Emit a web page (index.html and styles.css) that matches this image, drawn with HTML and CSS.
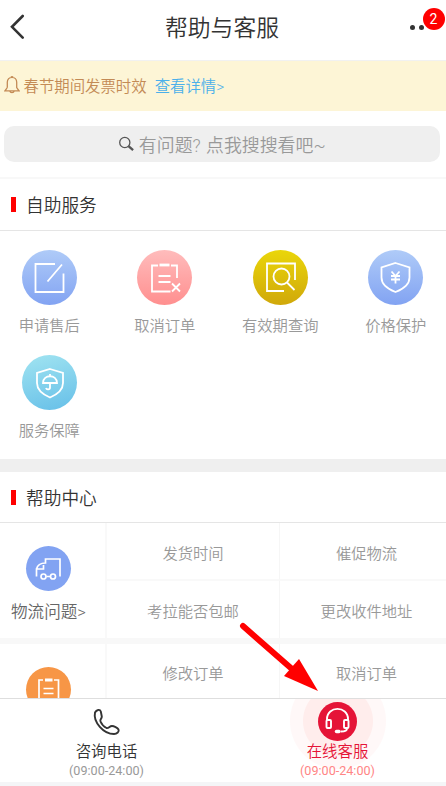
FILE: index.html
```html
<!DOCTYPE html>
<html lang="zh-CN">
<head>
<meta charset="utf-8">
<title>帮助与客服</title>
<link rel="stylesheet" href="styles.css">
</head>
<body>
<div class="page">
  <header class="header">
    <svg class="back" width="16" height="26" viewBox="0 0 16 26"><path d="M13.7 3 3 13.8 13.7 24.6"/></svg>
    <h1>帮助与客服</h1>
    <div class="more"><i></i><i></i><span class="badge">2</span></div>
  </header>
  <div class="notice">
    <svg width="16" height="19" viewBox="0 0 16 19"><path d="M7 2.2a1.2 1.2 0 0 1 2 0M3.3 12.5V7.3C3.3 4.2 5.3 2.3 8 2.3s4.7 1.9 4.7 5v5.2L15 15.8H1l2.3-3.3M5.8 16.2c.5 2 3.9 2 4.4 0"/></svg>
    <span>春节期间发票时效</span><a class="detail">查看详情&gt;</a>
  </div>
  <div class="search-area">
    <div class="search">
      <svg width="17" height="17" viewBox="0 0 17 17"><circle cx="6.8" cy="6.5" r="5.1"/><path class="handle" d="m10.5 10.2 4.6 4"/></svg>
      <span>有问题<b>?</b>点我搜搜看吧~</span>
    </div>
  </div>
  <h2 class="section-title">自助服务</h2>
  <div class="services">
    <div class="service"><div class="disc blue"><svg viewBox="0 0 55 55"><path d="M33 14H13.5v28h28V23.5M40 14.5 25.5 31.5"/></svg></div><span>申请售后</span></div>
    <div class="service"><div class="disc pink"><svg viewBox="0 0 55 55"><path d="M21 15.5h-6V41.5h18.5M34 15.5h6V28M21.5 26h12M21.5 32h12M35 33.5l8 8m0-8-8 8"/><path class="thick" d="M22.5 15h10"/></svg></div><span>取消订单</span></div>
    <div class="service"><div class="disc yellow"><svg viewBox="0 0 55 55"><path d="M31 41H14V13.5h28V30"/><circle cx="28.5" cy="26.5" r="8"/><path d="m34 32.5 7.5 7.5"/></svg></div><span>有效期查询</span></div>
    <div class="service"><div class="disc blue"><svg viewBox="0 0 55 55"><path d="m27.5 13 14 4.5v10c0 7-6 11.5-14 14.5-8-3-14-7.5-14-14.5v-10z"/><path d="m23.5 21.5 4 4.5 4-4.5M27.5 26v7.5M23 26h9M23 29.5h9"/></svg></div><span>价格保护</span></div>
    <div class="service"><div class="disc cyan"><svg viewBox="0 0 55 55"><path d="m28 14 13 4v10c0 6.5-6 11.5-13 14.5-7-3-13-8-13-14.5V18z"/><path d="M21 28c0-9 14-9 14 0zM28 19v2M28 28v4.500c0 2.500-3.500 2.500-4 .5"/></svg></div><span>服务保障</span></div>
  </div>
  <h2 class="section-title second">帮助中心</h2>
  <div class="help">
    <div class="group">
      <div class="category">
        <div class="dot truck"><svg viewBox="0 0 45 45"><path d="M10.5 30.500V23h7v-4M10.500 23c1-4 5-6 9-6v-4H34V30.500M20.500 30.500h4"/><circle cx="17.500" cy="30.500" r="2.500"/><circle cx="27" cy="30.500" r="2.500"/></svg></div>
        <span>物流问题&gt;</span>
      </div>
      <div class="cells"><span>发货时间</span><span>催促物流</span><span>考拉能否包邮</span><span>更改收件地址</span></div>
    </div>
    <div class="group">
      <div class="category">
        <div class="dot orange"><svg viewBox="0 0 45 45"><path d="M17 13h-4v24h19.500V13H28M17.500 21.500h10M17.500 26.500h10"/><path class="thick" d="M19 13h7.500"/></svg></div>
      </div>
      <div class="cells"><span>修改订单</span><span>取消订单</span></div>
    </div>
  </div>
  <footer class="contact">
    <div class="channel">
      <div class="channel-icon"><svg class="phone" width="30" height="30" viewBox="0 0 30 30"><path d="M3 4.500C4.500 1.500 8 1 8.800 3.500L9.800 8.500C10 11 7.500 11 8.500 13.500c1.200 3 3.500 5.200 6 6.500 2 .8 3-2 5.500-2 2 0 5.500 1.800 6.500 3.500 1 2-1.500 4.500-4.500 4.500C11.500 26 1 14 3 4.500z"/></svg></div>
      <strong>咨询电话</strong><small>(09:00-24:00)</small>
    </div>
    <div class="channel online">
      <div class="channel-icon"><svg class="headset" width="39" height="39" viewBox="0 0 39 39"><circle class="base" cx="19.500" cy="19.500" r="19.500"/><path d="M9 18v-1C9 3.500 30 3.500 30 17v1M29 26.500c0 2-2 3-6 3"/><rect x="8.500" y="18" width="4.500" height="8" rx="1"/><rect x="26" y="18" width="4.500" height="8" rx="1"/><path class="mic" d="M18.500 29.500h2.500"/></svg></div>
      <strong>在线客服</strong><small>(09:00-24:00)</small>
    </div>
  </footer>
  <svg class="arrow" width="80" height="72" viewBox="0 0 80 72"><path class="shaft" d="M5 6 54 49"/><path d="M61 39 80 71 46 56z"/></svg>
</div>
</body>
</html>
```
FILE: styles.css
```css
* { box-sizing: border-box; }
body { margin: 0; background: #fff; }
.page {
  position: relative;
  width: 446px;
  height: 786px;
  overflow: hidden;
  display: flex;
  flex-direction: column;
  font-family: Roboto, "Noto Sans CJK SC", sans-serif;
  font-weight: 350;
  color: #333;
}
svg { fill: none; flex: none; display: block; }
span, strong, small, h1, h2, a { white-space: nowrap; }
.header {
  height: 61px;
  flex: none;
  display: grid;
  grid-template-columns: 59px 1fr 61px;
  padding-top: 13px;
  border-bottom: 1px solid #f1f1f1;
}
.back { margin-left: 9px; stroke: #333; stroke-width: 2.6; stroke-linecap: round; }
h1 { margin: 0; padding-top: 2px; text-align: center; font-size: 22.8px; line-height: 28px; font-weight: 350; }
.more { position: relative; display: flex; gap: 4.5px; padding: 11.5px 0 0 24.5px; }
.more i { width: 5px; height: 5px; border-radius: 50%; background: #333; }
.badge {
  position: absolute;
  left: 37.5px;
  top: -5.5px;
  width: 22px;
  height: 22px;
  border-radius: 50%;
  background: #f00;
  color: #fff;
  font-size: 14px;
  line-height: 23px;
  font-weight: 400;
  text-align: center;
}
.notice {
  height: 50px;
  flex: none;
  display: flex;
  align-items: center;
  padding: 0 0 3px 4px;
  background: #fdf5d6;
  color: #c38a55;
  font-size: 15.4px;
}
.notice svg { stroke: #c38a55; stroke-width: 1.3; margin-right: 3.5px; }
.detail { color: #4bb0ea; margin-left: 8px; }
.search-area {
  height: 68px;
  flex: none;
  padding: 15px 6px 0 4px;
  border-bottom: 2px solid #f8f8f8;
}
.search {
  height: 36px;
  border-radius: 10px;
  background: #efefef;
  display: flex;
  align-items: center;
  justify-content: center;
  gap: 3.5px;
  font-size: 17.9px;
  color: #999;
}
.search svg { stroke: #555; stroke-width: 1.3; }
.search .handle { stroke-width: 2.4; }
.search b { display: inline-block; width: 13.5px; font-weight: inherit; }
.section-title {
  margin: 0;
  height: 52px;
  flex: none;
  display: flex;
  align-items: center;
  gap: 10px;
  padding: 0 0 2px 10.5px;
  border-bottom: 1px solid #e5e5e5;
  font-size: 17.7px;
  font-weight: 350;
}
.section-title::before { content: ""; width: 5.5px; height: 15px; background: #f00; position: relative; top: 1px; }
.second { height: 51px; padding-bottom: 0; }
.second::before { top: 0; }
.services {
  height: 241px;
  flex: none;
  display: grid;
  grid-template-columns: repeat(4, 115.5px);
  grid-auto-rows: 104.5px;
  justify-content: center;
  padding: 19px 1px 0 0;
  border-bottom: 13px solid #efefef;
}
.service { display: flex; flex-direction: column; align-items: center; color: #999; font-size: 15.3px; line-height: 20px; gap: 11px; }
.disc { width: 55px; height: 55px; border-radius: 50%; }
.disc svg { stroke: #fff; stroke-width: 1.8; }
.disc .thick { stroke-width: 2.8; }
.blue { background: linear-gradient(#afcbf8, #82a3f2); }
.pink { background: linear-gradient(#ffbcbc, #ff8f8f); }
.yellow { background: linear-gradient(#ead60a, #d0a80a); }
.cyan { background: linear-gradient(165deg, #a1e4f1, #66bfe8); }
.help { height: 175px; flex: none; overflow: hidden; }
.group { height: 120.5px; display: flex; border-bottom: 6.5px solid #f8f8f8; }
.category {
  width: 107px;
  flex: none;
  display: flex;
  flex-direction: column;
  align-items: center;
  gap: 12px;
  padding: 23px 8px 0 0;
  border-right: 2px solid #f9f9f9;
  color: #666;
  font-size: 16.6px;
  line-height: 20px;
}
.dot { width: 45px; height: 45px; border-radius: 50%; flex: none; }
.dot svg { stroke: #fff; stroke-width: 1.7; }
.dot .thick { stroke-width: 3; }
.truck { background: #82a3f2; }
.orange { background: #f79646; }
.cells { flex: 1; display: grid; grid-template-columns: 173px 1fr; grid-template-rows: 58px 1fr; }
.cells span {
  display: flex;
  align-items: center;
  justify-content: center;
  padding-top: 1px;
  color: #999;
  font-size: 15.3px;
}
.cells span:nth-child(odd) { border-right: 1px solid #f6f6f6; }
.cells span:nth-child(even) { padding-left: 7px; }
.cells span:nth-child(-n+2) { border-bottom: 2px solid #f9f9f9; }
.contact {
  height: 88px;
  flex: none;
  display: flex;
  border-top: 1px solid #dedede;
  border-bottom: 4px solid #f4f5f7;
}
.channel { width: 213px; display: flex; flex-direction: column; align-items: center; padding-top: 3px; }
.channel-icon { height: 40px; display: flex; align-items: flex-start; }
.phone { stroke: #333; stroke-width: 1.9; margin-top: 6px; }
.channel strong { font-size: 15.4px; line-height: 20px; font-weight: 350; }
.channel small { font-size: 12.6px; line-height: 18px; font-weight: 400; color: #999; }
.online {
  margin-left: 18px;
  background: radial-gradient(circle at 107px 22px, #ffedec 0 34.5px, #fff8f8 35.5px 47.5px, transparent 48.5px);
}
.online strong { color: #e51437; }
.online small { color: #ff8585; }
.headset { stroke: #fff; stroke-width: 1.9; }
.headset .base { fill: #e51437; stroke: none; }
.headset .mic { stroke-width: 3.5; stroke-linecap: round; }
.arrow { position: absolute; left: 238px; top: 620px; fill: #f00; }
.arrow .shaft { stroke: #f00; stroke-width: 6; stroke-linecap: round; }
```
